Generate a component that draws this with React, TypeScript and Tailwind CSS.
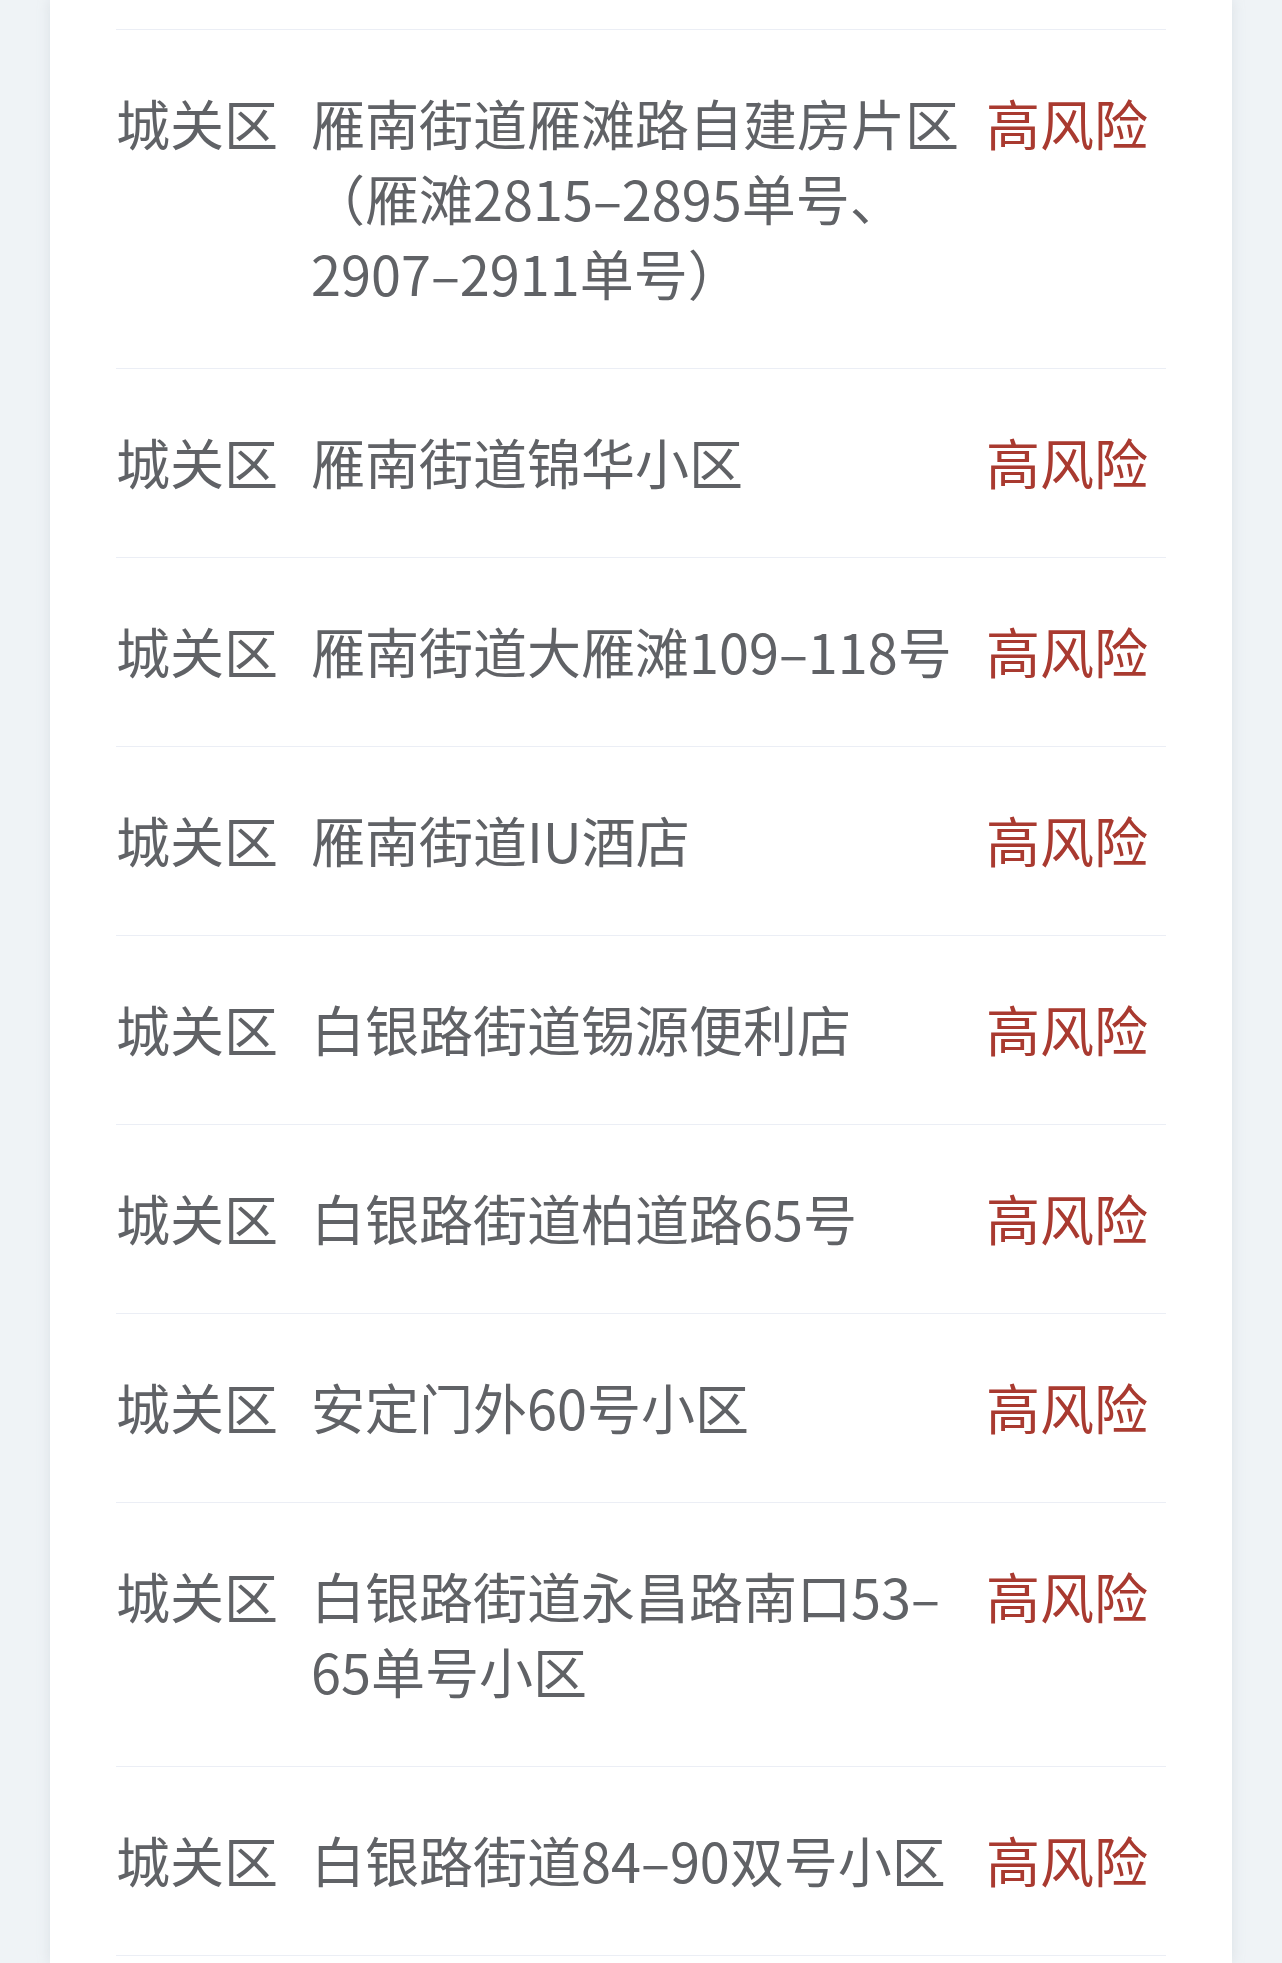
// 风险地区列表 — 城关区高风险小区
const rows: { district: string; place: string; level: string }[] = [
  { district: '城关区', place: '雁南街道雁滩路自建房片区（雁滩2815–2895单号、2907–2911单号）', level: '高风险' },
  { district: '城关区', place: '雁南街道锦华小区', level: '高风险' },
  { district: '城关区', place: '雁南街道大雁滩109–118号', level: '高风险' },
  { district: '城关区', place: '雁南街道IU酒店', level: '高风险' },
  { district: '城关区', place: '白银路街道锡源便利店', level: '高风险' },
  { district: '城关区', place: '白银路街道柏道路65号', level: '高风险' },
  { district: '城关区', place: '安定门外60号小区', level: '高风险' },
  { district: '城关区', place: '白银路街道永昌路南口53–65单号小区', level: '高风险' },
  { district: '城关区', place: '白银路街道84–90双号小区', level: '高风险' },
]

export default function App() {
  return (
    <div
      className="min-h-screen h-[1963px] overflow-hidden bg-[#eff3f6] px-[50px]"
      style={{ fontFamily: '"Noto Sans CJK SC", "Noto Sans", sans-serif' }}
    >
      {/* carte blanche */}
      <div className="h-full bg-white shadow-[0_0_12px_rgba(160,170,185,0.25)] px-[66px]">
        <div className="h-[30px] border-b border-[#ebeef5]" />
        {rows.map((r, i) => (
          <Row key={i} {...r} />
        ))}
      </div>
    </div>
  )
}

function Row({ district, place, level }: { district: string; place: string; level: string }) {
  return (
    <div className="flex items-start border-b border-[#ebeef5] pr-[18px] pt-[55px] pb-[58px] text-[54px] leading-[75px] text-[#606266]">
      <div className="w-[162px] shrink-0 whitespace-nowrap">{district}</div>
      <div className="ml-[33px] w-[660px] shrink-0">{place}</div>
      <div className="ml-auto w-[162px] shrink-0 whitespace-nowrap text-[#a93a30]">{level}</div>
    </div>
  )
}
